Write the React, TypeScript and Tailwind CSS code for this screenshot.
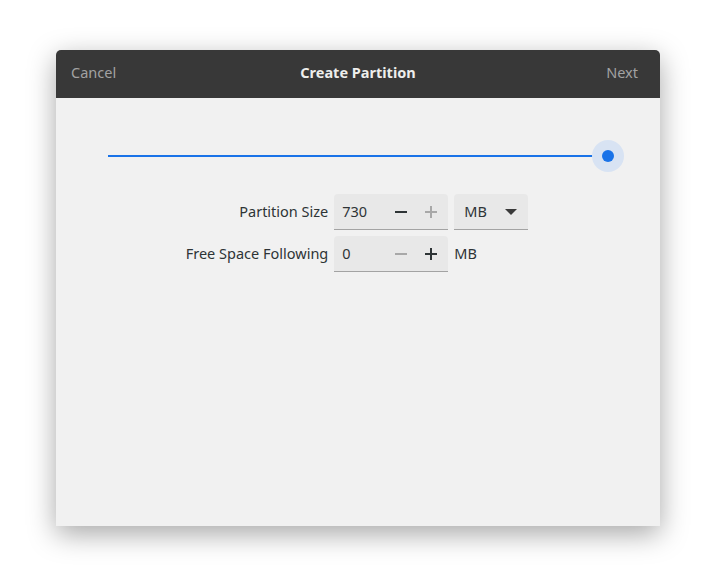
import React from "react";

const font = { fontFamily: '"Noto Sans", "Open Sans", sans-serif' };

function Minus({ disabled }: { disabled?: boolean }) {
  return (
    <svg width="14" height="14" viewBox="0 0 14 14">
      <rect x="1" y="6" width="12" height="2" fill={disabled ? "#a8a8a8" : "#2e3436"} />
    </svg>
  );
}
function Plus({ disabled }: { disabled?: boolean }) {
  return (
    <svg width="14" height="14" viewBox="0 0 14 14">
      <rect x="1" y="6" width="12" height="2" fill={disabled ? "#a8a8a8" : "#2e3436"} />
      <rect x="6" y="1" width="2" height="12" fill={disabled ? "#a8a8a8" : "#2e3436"} />
    </svg>
  );
}

function Spin({ value, minusDisabled, plusDisabled }: { value: string; minusDisabled?: boolean; plusDisabled?: boolean }) {
  return (
    <div className="flex h-[36px] w-[114px] items-center rounded-t-[4px] border-b border-[#a3a3a3] bg-[#e8e8e8]">
      <span className="w-[52px] pl-[8px] text-[14.5px] text-[#2e3436]">{value}</span>
      <div className="flex w-[30px] justify-center">
        <Minus disabled={minusDisabled} />
      </div>
      <div className="flex w-[30px] justify-center">
        <Plus disabled={plusDisabled} />
      </div>
    </div>
  );
}

export default function App() {
  return (
    <div className="h-[588px] w-[716px] bg-white pl-[56px] pt-[50px]" style={font}>
      <div className="flex h-[476px] w-[604px] flex-col overflow-hidden rounded-t-[5px] bg-[#f1f1f1] shadow-[0_8px_28px_rgba(0,0,0,0.35)]">
        <div className="relative flex h-[48px] items-center justify-between bg-[#383838] pb-[2px] pl-[15px] pr-[22px] text-[14.5px]">
          <span className="text-[#a2a2a2]">Cancel</span>
          <span className="absolute left-1/2 top-[12px] -translate-x-1/2 font-bold text-[#eeeeec]">Create Partition</span>
          <span className="text-[#a2a2a2]">Next</span>
        </div>
        <div className="mt-[42px] flex h-[32px] items-center px-[36px]">
          <div className="relative h-[32px] flex-1">
            <div className="absolute left-[16px] right-[16px] top-[15px] h-[2px] bg-[#1a73e8]" />
            <div className="absolute right-0 top-0 flex h-[32px] w-[32px] items-center justify-center rounded-full bg-[#d8e3f3]">
              <div className="h-[12px] w-[12px] rounded-full bg-[#1a73e8]" />
            </div>
          </div>
        </div>
        <div className="mt-[22px] flex justify-center pr-[2px]">
          <div className="grid grid-cols-[auto_auto_auto] items-center gap-x-[6px] gap-y-[6px] text-[14.5px] text-[#2e3436]">
            <span className="pb-[1px] text-right">Partition Size</span>
            <Spin value="730" plusDisabled />
            <div className="flex h-[36px] w-[74px] items-center justify-between rounded-t-[4px] border-b border-[#a3a3a3] bg-[#e8e8e8] pl-[10px] pr-[11px]">
              <span>MB</span>
              <svg width="12" height="8" viewBox="0 0 12 8">
                <path d="M0 1 L12 1 L6 7 Z" fill="#3a3a3a" />
              </svg>
            </div>
            <span className="pb-[1px] text-right">Free Space Following</span>
            <Spin value="0" minusDisabled />
            <span>MB</span>
          </div>
        </div>
      </div>
    </div>
  );
}
